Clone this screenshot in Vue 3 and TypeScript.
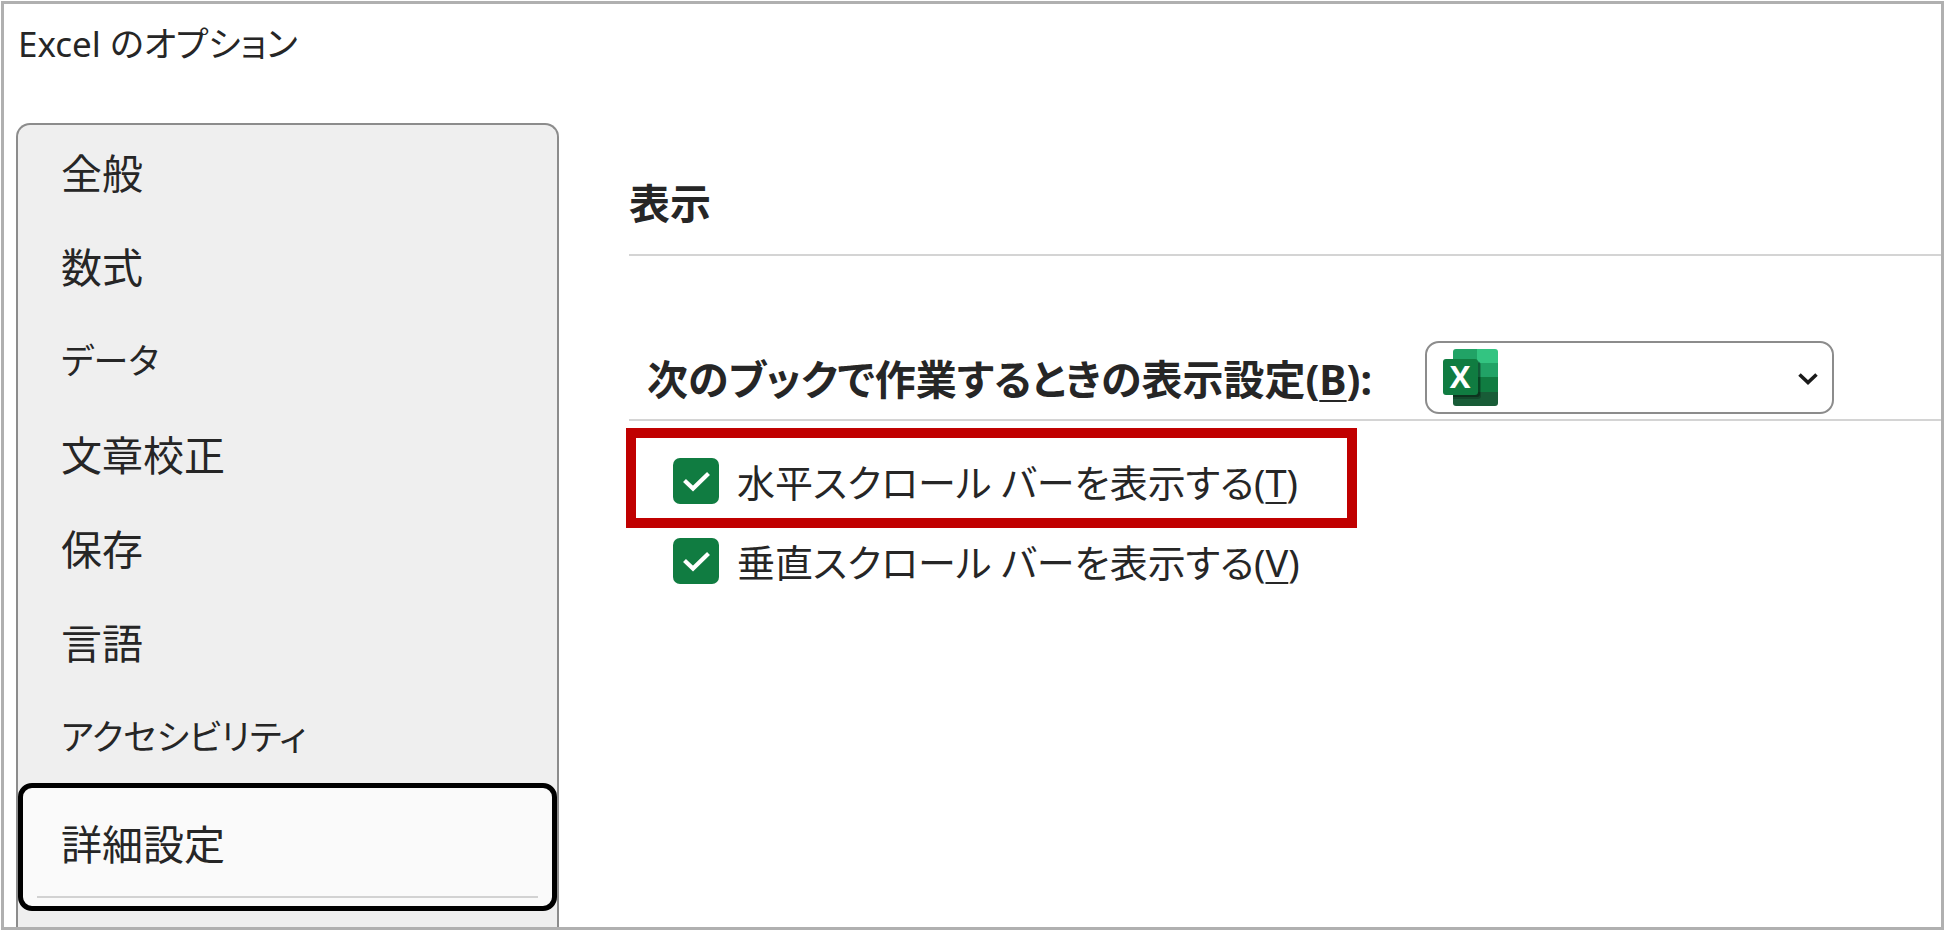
<script setup lang="ts">
import { ref } from 'vue'

interface Category {
  name: string
  kana?: boolean
}

interface ViewOption {
  id: string
  text: string
  key: string
  marked: boolean
}

const categories: Category[] = [
  { name: '全般' },
  { name: '数式' },
  { name: 'データ', kana: true },
  { name: '文章校正' },
  { name: '保存' },
  { name: '言語' },
  { name: 'アクセシビリティ', kana: true },
  { name: '詳細設定' },
]
const current = ref('詳細設定')
const book = ref('')

const options: ViewOption[] = [
  { id: 'hscroll', text: '水平スクロール バーを表示する', key: 'T', marked: true },
  { id: 'vscroll', text: '垂直スクロール バーを表示する', key: 'V', marked: false },
]
const checked = ref<string[]>(['hscroll', 'vscroll'])
</script>

<template>
  <div class="dialog">
    <h1 class="title">Excel のオプション</h1>
    <div class="body">
      <nav class="sidebar">
        <button
          v-for="c in categories"
          :key="c.name"
          type="button"
          class="category"
          :class="{ selected: c.name === current, kana: c.kana }"
          @click="current = c.name"
        >
          <span>{{ c.name }}</span>
        </button>
      </nav>
      <main class="panel">
        <h2 class="heading">表示</h2>
        <div class="book-row">
          <label class="book-label" for="book">次のブックで作業するときの表示設定(<u>B</u>):</label>
          <div class="picker">
            <select id="book" v-model="book" class="picker-select">
              <option value=""></option>
            </select>
            <svg class="logo" viewBox="0 0 55 57" aria-hidden="true">
              <defs>
                <clipPath id="sheet"><rect x="10" y="0" width="45" height="57" rx="3" /></clipPath>
              </defs>
              <g clip-path="url(#sheet)">
                <rect x="10" y="0" width="25" height="15" fill="#21a366" />
                <rect x="34" y="0" width="21" height="15" fill="#33c481" />
                <rect x="10" y="14" width="25" height="15" fill="#107c41" />
                <rect x="34" y="14" width="21" height="15" fill="#21a366" />
                <rect x="10" y="28" width="45" height="15" fill="#107c41" />
                <rect x="10" y="43" width="45" height="14" fill="#185c37" />
                <rect x="8" y="13" width="30" height="37" rx="3" fill="#000" opacity="0.2" />
                <rect x="8" y="12" width="29" height="36" rx="3" fill="#000" opacity="0.3" />
              </g>
              <rect x="0" y="10" width="35" height="36" rx="3" fill="#107c41" />
              <text x="17" y="39" text-anchor="middle" class="logo-letter">X</text>
            </svg>
            <svg class="chevron" viewBox="0 0 20 12" aria-hidden="true">
              <path d="M1.5 1.5 L10 9.5 L18.5 1.5" fill="none" stroke="#1a1a1a" stroke-width="3.6" />
            </svg>
          </div>
        </div>
        <div v-for="o in options" :key="o.id" class="option" :class="{ marked: o.marked }">
          <span class="box">
            <input :id="o.id" v-model="checked" type="checkbox" :value="o.id" class="box-input" />
            <svg class="tick" viewBox="0 0 46 46" aria-hidden="true">
              <path d="M11.5 22.5 L20 30.5 L35.5 15.5" fill="none" stroke="#fff" stroke-width="4.2" />
            </svg>
          </span>
          <label :for="o.id" class="option-label">{{ o.text }}(<u>{{ o.key }}</u>)</label>
        </div>
      </main>
    </div>
  </div>
</template>

<style>
body {
  margin: 0;
  background: #fff;
}
</style>

<style scoped>
.dialog {
  display: flex;
  flex-direction: column;
  box-sizing: border-box;
  min-height: calc(100vh - 2px);
  margin: 1px;
  border: 3px solid #b0b0b0;
  background: #fff;
  color: #262626;
  font-family: 'Noto Sans', 'Noto Sans CJK JP', sans-serif;
  font-size: 41px;
  font-feature-settings: 'palt';
  line-height: 60px;
}
.title {
  margin: 0;
  padding: 10px 14px 49px;
  font-size: 35px;
  font-weight: 400;
}
.body {
  display: flex;
  flex: 1;
}
.sidebar {
  display: flex;
  flex: 0 0 543px;
  flex-direction: column;
  box-sizing: border-box;
  margin-left: 12px;
  padding-bottom: 16px;
  border: 2px solid #8c8c8c;
  border-bottom: 0;
  border-radius: 14px 14px 0 0;
  background: #efefef;
}
.category {
  height: 94px;
  padding: 2px 0 0 43px;
  border: 0;
  background: transparent;
  color: inherit;
  font: inherit;
  font-feature-settings: inherit;
  text-align: left;
}
.category.kana {
  font-size: 35px;
}
.category.selected {
  display: flex;
  flex-direction: column;
  justify-content: space-between;
  height: 128px;
  padding: 26px 14px 8px;
  border: 5px solid #000;
  border-radius: 14px;
  background: #fafafa;
}
.category.selected span {
  padding-left: 24px;
}
.category.selected::after {
  height: 2px;
  background: #d2d2d2;
  content: '';
}
.panel {
  flex: 1;
  min-width: 0;
  padding-left: 67px;
}
.heading {
  margin: 0 0 0 3px;
  padding: 50px 0 21px;
  border-bottom: 2px solid #d4d4d4;
  font-size: 41px;
  font-weight: 700;
}
.book-row {
  display: flex;
  align-items: center;
  justify-content: space-between;
  margin: 0 0 7px 3px;
  padding: 85px 107px 5px 18px;
  border-bottom: 2px solid #d4d4d4;
}
.book-label {
  padding-top: 2px;
  font-weight: 700;
  white-space: nowrap;
}
.picker {
  position: relative;
  width: 409px;
}
.picker-select {
  display: block;
  box-sizing: border-box;
  width: 100%;
  height: 73px;
  padding: 0 60px 0 84px;
  border: 2px solid #8c8c8c;
  border-radius: 14px;
  appearance: none;
  background: #fff;
  color: inherit;
  font: inherit;
}
.logo {
  position: absolute;
  top: 8px;
  left: 18px;
  width: 55px;
  height: 57px;
  pointer-events: none;
}
.logo-letter {
  fill: #fff;
  font-family: 'Open Sans', sans-serif;
  font-size: 31px;
  font-weight: 700;
}
.chevron {
  position: absolute;
  top: 32px;
  right: 16px;
  width: 20px;
  height: 12px;
  pointer-events: none;
}
u {
  text-decoration-thickness: 2px;
  text-underline-offset: 5px;
}
.option {
  display: flex;
  align-items: center;
  gap: 18px;
  box-sizing: border-box;
  height: 65px;
  padding-left: 47px;
}
.option.marked {
  width: 731px;
  height: 100px;
  padding: 5px 0 0 37px;
  border: 10px solid #c00000;
}
.box {
  position: relative;
  flex: none;
  width: 46px;
  height: 46px;
}
.box-input {
  display: block;
  width: 46px;
  height: 46px;
  margin: 0;
  border: 2px solid #8c8c8c;
  border-radius: 7px;
  appearance: none;
  background: #fff;
}
.box-input:checked {
  border: 0;
  background: #107c41;
}
.tick {
  position: absolute;
  inset: 0;
  pointer-events: none;
}
.option-label {
  padding-top: 2px;
  font-size: 38px;
  white-space: nowrap;
}
</style>
